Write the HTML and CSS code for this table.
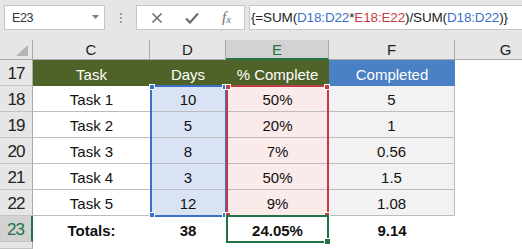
FILE: index.html
```html
<!DOCTYPE html>
<html lang="en">

<head>
    <meta charset="UTF-8">
    <meta name="viewport" content="width=device-width, initial-scale=1.0">
    <title>Weighted Completion</title>

    <link rel="stylesheet" href="styles.css">
</head>

<body>
    <div class="formula-bar">
        <div class="name-box">
            <span>E23</span>
            <svg class="caret" width="7" height="4" viewBox="0 0 7 4">
                <path d="M0 0 H7 L3.5 4 Z" fill="#7f7f7f" />
            </svg>
        </div>
        <div class="grip">
            <span></span><span></span><span></span>
        </div>
        <div class="fx-buttons">
            <svg width="12" height="12" viewBox="0 0 12 12">
                <path d="M1.5 1.5 L10.5 10.5 M10.5 1.5 L1.5 10.5" stroke="#6d6d6d" stroke-width="1.6" fill="none" />
            </svg>
            <svg width="14" height="12" viewBox="0 0 14 12">
                <path d="M1 6.5 L5 10.5 L13 1.5" stroke="#6d6d6d" stroke-width="2.2" fill="none" />
            </svg>
            <span class="fx">f<i>x</i></span>
        </div>
        <div class="formula">{=SUM(<span class="ref-d">D18:D22</span>*<span class="ref-e">E18:E22</span>)/SUM(<span class="ref-d">D18:D22</span>)}</div>
    </div>

    <div class="sheet">
        <!-- column headers -->
        <div class="col-head corner">
            <svg width="13" height="12" viewBox="0 0 13 12">
                <path d="M12 0 V11 H0 Z" fill="#b5b5b5" />
            </svg>
        </div>
        <div class="col-head">C</div>
        <div class="col-head">D</div>
        <div class="col-head active">E</div>
        <div class="col-head">F</div>
        <div class="col-head">G</div>

        <!-- 17 -->
        <div class="row-head">17</div>
        <div class="cell title-green">Task</div>
        <div class="cell title-green">Days</div>
        <div class="cell title-green">% Complete</div>
        <div class="cell title-blue">Completed</div>
        <div class="cell"></div>

        <!-- 18 -->
        <div class="row-head">18</div>
        <div class="cell task">Task 1</div>
        <div class="cell days">10</div>
        <div class="cell pct">50%</div>
        <div class="cell done">5</div>
        <div class="cell"></div>

        <!-- 19 -->
        <div class="row-head">19</div>
        <div class="cell task">Task 2</div>
        <div class="cell days">5</div>
        <div class="cell pct">20%</div>
        <div class="cell done">1</div>
        <div class="cell"></div>

        <!-- 20 -->
        <div class="row-head">20</div>
        <div class="cell task">Task 3</div>
        <div class="cell days">8</div>
        <div class="cell pct">7%</div>
        <div class="cell done">0.56</div>
        <div class="cell"></div>

        <!-- 21 -->
        <div class="row-head">21</div>
        <div class="cell task">Task 4</div>
        <div class="cell days">3</div>
        <div class="cell pct">50%</div>
        <div class="cell done">1.5</div>
        <div class="cell"></div>

        <!-- 22 -->
        <div class="row-head">22</div>
        <div class="cell task">Task 5</div>
        <div class="cell days">12</div>
        <div class="cell pct">9%</div>
        <div class="cell done">1.08</div>
        <div class="cell"></div>

        <!-- 23 -->
        <div class="row-head active">23</div>
        <div class="cell total">Totals:</div>
        <div class="cell total">38</div>
        <div class="cell total">24.05%</div>
        <div class="cell total">9.14</div>
        <div class="cell"></div>

        <!-- 24 -->
        <div class="row-head"></div>

        <!-- reference ranges and the active cell, drawn over the cells -->
        <div class="range range-d">
            <i class="handle tl"></i><i class="handle tr"></i>
            <i class="handle bl"></i><i class="handle br"></i>
        </div>
        <div class="range range-e">
            <i class="handle tl"></i><i class="handle tr"></i>
            <i class="handle bl"></i><i class="handle br"></i>
        </div>
        <div class="selection">
            <i class="fill-handle"></i>
        </div>
    </div>
</body>

</html>
```

FILE: styles.css
```css
* {
    margin: 0;
    padding: 0;
    box-sizing: border-box;
}

body {
    width: 522px;
    height: 249px;
    overflow: hidden;
    font-family: "Liberation Sans", Arial, sans-serif;
    background: #fff;
}

/* ---------- formula bar ---------- */

.formula-bar {
    display: flex;
    height: 40px;
    padding: 5px 0 0 4px;
    background: #e6e6e6;
}

.name-box {
    width: 101px;
    height: 25px;
    display: flex;
    align-items: center;
    justify-content: space-between;
    padding: 0 5px 0 7px;
    background: #fff;
    border: 1px solid #c6c6c6;
    font-size: 12.5px;
    letter-spacing: -0.4px;
    color: #333;
}

.caret {
    margin-top: -2px;
}

.grip {
    width: 31px;
    height: 25px;
    display: flex;
    flex-direction: column;
    align-items: center;
    justify-content: center;
    gap: 2px;
}

.grip span {
    width: 2px;
    height: 2px;
    background: #a0a0a0;
}

.fx-buttons {
    width: 109px;
    height: 25px;
    display: grid;
    grid-template-columns: repeat(3, 35px);
    justify-items: center;
    align-items: center;
    padding-left: 2px;
    background: #fff;
    border: 1px solid #c6c6c6;
}

.fx {
    font-family: "Liberation Serif", serif;
    font-style: italic;
    font-size: 15px;
    color: #6d6d6d;
}

.fx i {
    font-size: 11px;
    vertical-align: -1px;
}

.formula {
    flex: 1;
    height: 25px;
    margin: 0 -2px 0 4px;
    padding: 4px 0 0 1px;
    background: #fff;
    border: 1px solid #c6c6c6;
    font-size: 13.5px;
    letter-spacing: -0.15px;
    color: #222;
    white-space: nowrap;
}

.ref-d {
    color: #3c6fc6;
}

.ref-e {
    color: #c83a3f;
}

/* ---------- grid ---------- */

.sheet {
    position: relative;
    width: 557px;
    display: grid;
    grid-template-columns: 33px 117px 76px 103px 126px 102px;
    grid-template-rows: 20px repeat(7, 26px) 1fr;
    height: 209px;
}

.col-head {
    display: flex;
    align-items: center;
    justify-content: center;
    background: #e6e6e6;
    border-right: 1px solid #ababab;
    border-bottom: 1px solid #ababab;
    font-size: 15px;
    color: #222;
}

.col-head.corner {
    justify-content: flex-end;
    align-items: flex-end;
    padding: 0 3px 2px 0;
}

.col-head.active {
    background: #d2d2d2;
    border-bottom: 2px solid #217346;
    color: #217346;
}

.row-head {
    display: flex;
    align-items: center;
    justify-content: center;
    padding-top: 2px;
    background: #e6e6e6;
    border-right: 1px solid #ababab;
    border-bottom: 1px solid #c4c4c4;
    font-size: 17px;
    letter-spacing: -1px;
    color: #222;
}

.row-head.active {
    background: #d2d2d2;
    border-right: 2px solid #217346;
    color: #217346;
}

.cell {
    display: flex;
    align-items: center;
    justify-content: center;
    padding-top: 2px;
    font-size: 15px;
    color: #111;
}

.title-green {
    background: #4f6228;
    color: #fff;
}

.title-blue {
    background: #4a80c4;
    color: #fff;
}

.task,
.days,
.pct,
.done {
    border-bottom: 1px solid #bcbcbc;
}

.days {
    background: #dae3f3;
}

.pct {
    background: #fbeaea;
}

.done {
    background: #f2f2f2;
    border-right: 1px solid #bcbcbc;
}

.total {
    font-weight: bold;
}

/* ---------- range outlines ---------- */

.range,
.selection {
    position: absolute;
    border: 2px solid;
}

.range {
    top: 45px;
    height: 132px;
}

.range-d {
    left: 150px;
    width: 77px;
    border-color: #3c6fc6;
}

.range-e {
    left: 226px;
    width: 103px;
    border-color: #c33b44;
}

.selection {
    left: 226px;
    top: 175px;
    width: 103px;
    height: 28px;
    border-color: #217346;
}

.handle,
.fill-handle {
    position: absolute;
    width: 6px;
    height: 6px;
    border: 1px solid #fff;
}

.range-d .handle {
    background: #3c6fc6;
}

.range-e .handle {
    background: #c33b44;
}

.handle.tl { top: -3px; left: -3px; }
.handle.tr { top: -3px; right: -3px; }
.handle.bl { bottom: -3px; left: -3px; }
.handle.br { bottom: -3px; right: -3px; }

.fill-handle {
    right: -4px;
    bottom: -4px;
    width: 7px;
    height: 7px;
    background: #217346;
}
```
